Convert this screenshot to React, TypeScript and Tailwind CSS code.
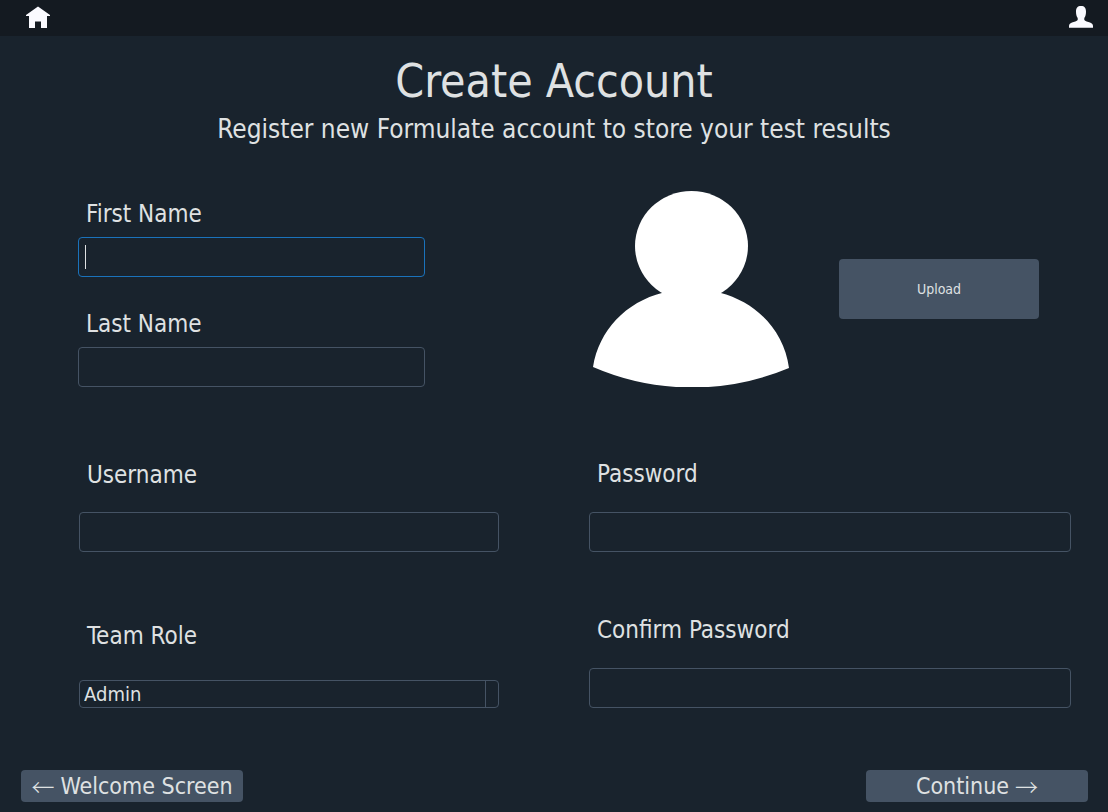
import React from "react";

const fieldClass =
  "block h-10 w-full rounded border border-[#455364] bg-transparent px-1.5 text-2xl outline-none focus:border-[#1a72bb]";

function HomeIcon() {
  return (
    <svg viewBox="0 0 24 24" className="block size-6" fill="#fafaff" aria-hidden="true">
      <path d="M12 .6 24 9V10H21V22H15V15.500H9V22H3V10H0V9Z" />
    </svg>
  );
}

function UserIcon() {
  return (
    <svg viewBox="0 0 24 24" className="block size-6" fill="#fafaff" aria-hidden="true">
      <path d="M12 0C15.500 0 17 2 17 5.500C17 8.500 16.500 10.500 15.300 12V14C16 15.200 19 15.800 21 16.600C23.200 17.500 24 18.600 24 20.200V21.700H0V20.200C0 18.600 .8 17.500 3 16.600C5 15.800 8 15.200 8.700 14V12C7.500 10.500 7 8.500 7 5.500C7 2 8.500 0 12 0Z" />
    </svg>
  );
}

function Avatar() {
  return (
    <svg viewBox="0 0 196 196" className="size-[196px] shrink-0" fill="#fff" role="img" aria-label="Profile picture">
      <ellipse cx="98.500" cy="55" rx="56.500" ry="55" />
      <path d="M0 176C6 139 33 111 69.700 101.700L98 90L127 101.700C163 111 191 139 196 177A250 250 0 0 1 0 176Z" />
    </svg>
  );
}

function Field({
  id,
  label,
  type = "text",
  className,
}: {
  id: string;
  label: string;
  type?: string;
  className: string;
}) {
  return (
    <div className={`flex flex-col ${className}`}>
      <label htmlFor={id} className="pl-2 text-2xl">
        {label}
      </label>
      <input id={id} type={type} className={fieldClass} />
    </div>
  );
}

export default function App() {
  return (
    <div className="flex min-h-screen flex-col bg-[#19232d] font-['DejaVu_Sans_Condensed','DejaVu_Sans',sans-serif] text-[#dfe1e2]">
      <header className="flex h-9 items-center justify-between bg-[#141a21] pr-[15px] pl-[26px]">
        <button type="button" aria-label="Home">
          <HomeIcon />
        </button>
        <button type="button" aria-label="Account">
          <UserIcon />
        </button>
      </header>

      <main className="flex-1">
        <div className="pt-[17px] text-center">
          <h1 className="text-[46px] leading-[56px]">Create Account</h1>
          <p className="text-[26px] leading-10">Register new Formulate account to store your test results</p>
        </div>

        <form id="account" className="pt-[42px] pr-[37px] pl-[78px]">
          <div className="grid grid-cols-[421fr_482fr] gap-x-[90px]">
            <div className="flex max-w-[347px] flex-col gap-[31px] pt-[7px]">
              <div className="flex flex-col gap-[7px]">
                <label htmlFor="first" className="pl-2 text-2xl">
                  First Name
                </label>
                <div className="relative">
                  <input
                    id="first"
                    type="text"
                    autoFocus
                    placeholder=" "
                    className={`peer placeholder-shown:caret-transparent ${fieldClass}`}
                  />
                  <span className="pointer-events-none absolute top-2 left-[7px] hidden h-6 w-px bg-[#dfe1e2] peer-placeholder-shown:peer-focus:block" />
                </div>
              </div>
              <Field id="last" label="Last Name" className="gap-[7px]" />
            </div>
            <div className="flex items-center gap-[50px] pl-1">
              <Avatar />
              <button type="button" className="h-[60px] w-[200px] rounded bg-[#455364] text-sm">
                Upload
              </button>
            </div>
          </div>

          <div className="grid grid-cols-[421fr_482fr] gap-x-[90px] pt-[71px]">
            <div className="flex flex-col gap-[68px] pt-px pl-px">
              <Field id="username" label="Username" className="gap-[21px]" />
              <div className="flex flex-col gap-7">
                <label htmlFor="role" className="pl-2 text-2xl">
                  Team Role
                </label>
                <div className="flex h-7 rounded border border-[#455364]">
                  <select id="role" className="flex-1 appearance-none bg-transparent pl-1 text-xl leading-6 outline-none">
                    <option className="bg-[#19232d]">Admin</option>
                  </select>
                  <span className="w-[13px] border-l border-[#455364]" />
                </div>
              </div>
            </div>
            <div className="flex flex-col gap-[62px]">
              <Field id="password" label="Password" type="password" className="gap-[22px]" />
              <Field id="confirm" label="Confirm Password" type="password" className="gap-[22px]" />
            </div>
          </div>
        </form>
      </main>

      <footer className="flex justify-between pr-5 pb-2.5 pl-[21px] text-[23px] leading-8">
        <button type="button" className="flex h-8 w-[222px] items-center justify-center gap-1.5 rounded bg-[#455364]">
          <span className="font-['Noto_Sans_CJK_JP',sans-serif] font-light">←</span>
          Welcome Screen
        </button>
        <button
          type="submit"
          form="account"
          className="flex h-8 w-[222px] items-center justify-center gap-1.5 rounded bg-[#455364]"
        >
          Continue
          <span className="font-['Noto_Sans_CJK_JP',sans-serif] font-light">→</span>
        </button>
      </footer>
    </div>
  );
}
